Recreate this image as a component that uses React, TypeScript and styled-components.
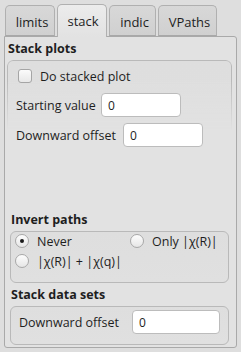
import React from 'react';
import styled, { createGlobalStyle } from 'styled-components';

const GlobalStyle = createGlobalStyle`
  html, body {
    margin: 0;
    padding: 0;
    background: #dedede;
  }
  body {
    font-family: 'Open Sans', 'Noto Sans', 'DejaVu Sans', sans-serif;
    font-size: 12.5px;
    color: #1e1e1e;
  }
`;

const Window = styled.div`
  width: 241px;
  height: 352px;
  box-sizing: border-box;
  padding: 4px 4px 4px 4px;
  display: flex;
  flex-direction: column;
`;

const TabBar = styled.div`
  display: flex;
  align-items: flex-end;
  height: 32px;
  padding-left: 1px;
  position: relative;
  z-index: 2;
`;

const Tab = styled.div<{ $w: number; $gap: number; $active?: boolean }>`
  width: ${p => p.$w}px;
  margin-left: ${p => p.$gap}px;
  height: ${p => (p.$active ? 33 : 31)}px;
  margin-bottom: ${p => (p.$active ? -1 : 0)}px;
  box-sizing: border-box;
  border: 1px solid #b0b0b0;
  border-bottom: ${p => (p.$active ? 'none' : '1px solid #a8a8a8')};
  border-radius: 5px 5px 0 0;
  background: ${p =>
    p.$active
      ? 'linear-gradient(#ececec, #e2e2e2)'
      : 'linear-gradient(#d8d8d8, #d0d0d0)'};
  display: flex;
  align-items: center;
  justify-content: center;
  padding-top: ${p => (p.$active ? 0 : 3)}px;
  padding-left: ${p => (p.$active ? 2 : 4)}px;
  font-size: 13px;
`;

const Pane = styled.div`
  flex: 1;
  box-sizing: border-box;
  border: 1px solid #a9a9a9;
  border-radius: 0 3px 3px 3px;
  background: #e2e2e2;
  padding: 0 4px 0 1px;
  display: flex;
  flex-direction: column;
`;

const Heading = styled.div<{ $indent: number; $top: number }>`
  font-weight: bold;
  font-size: 12.5px;
  line-height: 16px;
  margin-left: ${p => p.$indent}px;
  margin-top: ${p => p.$top}px;
`;

const GroupBox = styled.div<{ $h: number; $indent: number; $fade?: boolean }>`
  position: relative;
  height: ${p => p.$h}px;
  margin-left: ${p => p.$indent}px;
  margin-right: ${p => (p.$indent > 2 ? 3 : 0)}px;
  margin-top: 3px;
  box-sizing: border-box;
  &::before {
    content: '';
    position: absolute;
    inset: 0;
    border: 1px solid #b9b9b9;
    border-radius: 6px;
    background: linear-gradient(#dedede, #e0e0e0);
    ${p =>
      p.$fade
        ? '-webkit-mask-image: linear-gradient(to bottom, #000 0, #000 20px, transparent 70px); mask-image: linear-gradient(to bottom, #000 0, #000 20px, transparent 70px);'
        : ''}
  }
  & > * {
    position: relative;
  }
`;

const CheckRow = styled.label`
  display: flex;
  align-items: center;
  gap: 8px;
  padding: 8px 0 0 11px;
  height: 16px;
`;

const CheckBox = styled.span`
  width: 14px;
  height: 14px;
  box-sizing: border-box;
  border: 1px solid #a5a5a5;
  border-radius: 3px;
  background: linear-gradient(#fbfbfb, #e8e8e8);
`;

const FieldRow = styled.div<{ $top: number; $left: number }>`
  display: flex;
  align-items: center;
  margin-top: ${p => p.$top}px;
  padding-left: ${p => p.$left}px;
  height: 24px;
`;

const FieldLabel = styled.span<{ $w: number }>`
  width: ${p => p.$w}px;
  flex: none;
  white-space: nowrap;
`;

const Input = styled.div<{ $w: number }>`
  width: ${p => p.$w}px;
  height: 24px;
  box-sizing: border-box;
  border: 1px solid #bcbcbc;
  border-radius: 4px;
  background: #ffffff;
  padding: 4px 0 0 6px;
  font-size: 12px;
  line-height: 16px;
`;

const RadioGrid = styled.div`
  display: grid;
  grid-template-columns: 115px 1fr;
  row-gap: 6px;
  padding: 3px 0 0 5px;
`;

const RadioItem = styled.label`
  display: flex;
  align-items: center;
  gap: 8px;
  height: 14px;
  white-space: nowrap;
`;

const RadioDot = styled.span<{ $on?: boolean }>`
  width: 14px;
  height: 14px;
  flex: none;
  box-sizing: border-box;
  border: 1px solid #a8a8a8;
  border-radius: 50%;
  background: linear-gradient(#fdfdfd, #e6e6e6);
  display: flex;
  align-items: center;
  justify-content: center;
  &::after {
    content: '';
    width: 4px;
    height: 4px;
    border-radius: 50%;
    background: ${p => (p.$on ? '#1a1a1a' : 'transparent')};
  }
`;

const App: React.FC = () => {
  return (
    <>
      <GlobalStyle />
      <Window>
        <TabBar>
          <Tab $w={50} $gap={0}>limits</Tab>
          <Tab $w={50} $gap={2} $active>
            stack
          </Tab>
          <Tab $w={47} $gap={2}>indic</Tab>
          <Tab $w={59} $gap={2}>VPaths</Tab>
        </TabBar>
        <Pane>
          <Heading $indent={2} $top={4}>
            Stack plots
          </Heading>
          <GroupBox $h={150} $indent={1} $fade>
            <CheckRow>
              <CheckBox />
              Do stacked plot
            </CheckRow>
            <FieldRow $top={9} $left={9}>
              <FieldLabel $w={85}>Starting value</FieldLabel>
              <Input $w={80}>0</Input>
            </FieldRow>
            <FieldRow $top={6} $left={9}>
              <FieldLabel $w={107}>Downward offset</FieldLabel>
              <Input $w={80}>0</Input>
            </FieldRow>
          </GroupBox>
          <Heading $indent={5} $top={2}>
            Invert paths
          </Heading>
          <GroupBox $h={52} $indent={4}>
            <RadioGrid>
              <RadioItem>
                <RadioDot $on />
                Never
              </RadioItem>
              <RadioItem>
                <RadioDot />
                Only |χ(R)|
              </RadioItem>
              <RadioItem>
                <RadioDot />
                |χ(R)| + |χ(q)|
              </RadioItem>
            </RadioGrid>
          </GroupBox>
          <Heading $indent={5} $top={4}>
            Stack data sets
          </Heading>
          <GroupBox $h={39} $indent={4}>
            <FieldRow $top={4} $left={9}>
              <FieldLabel $w={113}>Downward offset</FieldLabel>
              <Input $w={88}>0</Input>
            </FieldRow>
          </GroupBox>
        </Pane>
      </Window>
    </>
  );
};

export default App;
